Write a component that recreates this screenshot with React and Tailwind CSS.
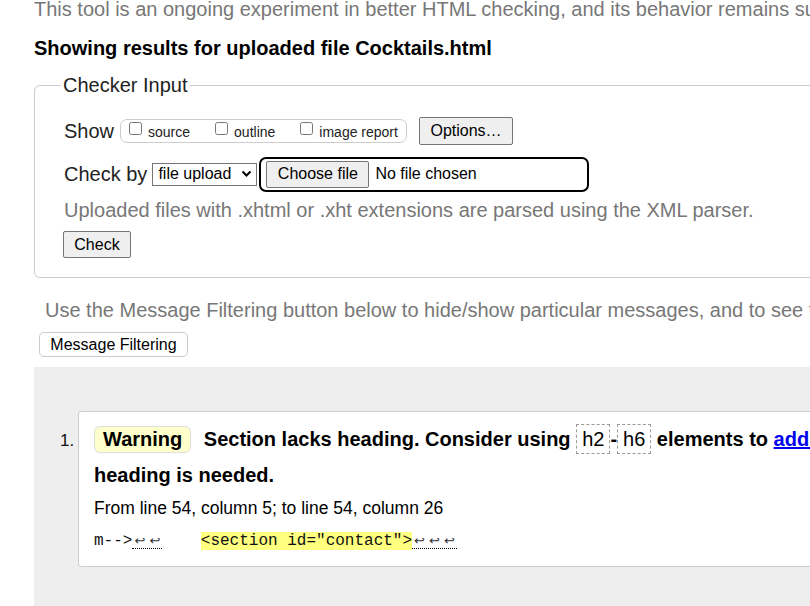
import React from "react";

function Btn({ children, className = "" }) {
  return (
    <button
      type="button"
      className={`bg-[#efefef] border border-[#767676] rounded-[2px] text-[16px] leading-[18px] text-black ${className}`}
    >
      {children}
    </button>
  );
}

function Check({ label }) {
  return (
    <label className="flex items-center gap-[6px]">
      <input type="checkbox" className="m-0 w-[13px] h-[13px] -mt-[5px]" />
      <span className="text-[14px] leading-[16px] pt-[2px]">{label}</span>
    </label>
  );
}

function Arrows({ n }) {
  return (
    <span className="border-b border-dotted border-black font-['DejaVu_Sans',sans-serif] text-[13px] text-[#333]">
      {Array.from({ length: n }).map((_, i) => (
        <span key={i} className="inline-block w-[15px] text-center">
          ↩
        </span>
      ))}
    </span>
  );
}

export default function App() {
  return (
    <div className="w-[810px] h-[606px] overflow-hidden bg-white font-['Liberation_Sans',Arial,sans-serif] text-[#222]">
      <p className="pl-[34px] -mt-[2px] whitespace-nowrap text-[20px] leading-[22px] text-[#777]">
        This tool is an ongoing experiment in better HTML checking, and its
        behavior remains subject to change
      </p>
      <h2 className="pl-[34px] mt-[16px] whitespace-nowrap text-[20px] leading-[24px] font-bold text-black">
        Showing results for uploaded file Cocktails.html
      </h2>

      <fieldset className="ml-[34px] mt-[14px] w-[900px] border border-[#ccc] rounded-[6px] pl-[29px] pb-[19px]">
        <legend className="-ml-[3px] px-[2px] text-[20px] leading-[22px]">
          Checker Input
        </legend>

        <div className="mt-[20px] h-[30px] flex items-center">
          <span className="text-[20px] leading-[24px] mr-[6px]">Show</span>
          <div className="h-[24px] w-[287px] flex items-center border border-[#ccc] rounded-[7px] pl-[8px] gap-[25px]">
            <Check label="source" />
            <Check label="outline" />
            <Check label="image report" />
          </div>
          <Btn className="ml-[12px] w-[94px] h-[28px]">Options…</Btn>
        </div>

        <div className="mt-[11px] h-[34px] flex items-center">
          <span className="text-[20px] leading-[24px] mr-[5px]">Check by</span>
          <div className="w-[105px] h-[23px] border border-[#767676] flex items-center justify-between pl-[5px] pr-[4px] text-[16px] text-black">
            <span>file upload</span>
            <svg width="11" height="8" viewBox="0 0 11 8">
              <path d="M1.5 1.5 L5.5 5.5 L9.5 1.5" fill="none" stroke="#000" strokeWidth="2" />
            </svg>
          </div>
          <div className="ml-[2px] w-[330px] h-[35px] border-2 border-black rounded-[7px] flex items-center pl-[5px]">
            <Btn className="w-[103px] h-[27px]">Choose file</Btn>
            <span className="ml-[6px] text-[16px] text-black">No file chosen</span>
          </div>
        </div>

        <p className="mt-[7px] h-[24px] text-[20px] leading-[24px] text-[#777] whitespace-nowrap">
          Uploaded files with .xhtml or .xht extensions are parsed using the XML
          parser.
        </p>

        <Btn className="mt-[9px] -ml-[1px] w-[68px] h-[27px] block">Check</Btn>
      </fieldset>

      <p className="pl-[45px] mt-[20px] text-[20px] leading-[24px] text-[#777] whitespace-nowrap">
        Use the Message Filtering button below to hide/show particular messages,
        and to see total counts of errors and warnings.
      </p>
      <button
        type="button"
        className="ml-[39px] mt-[10px] w-[149px] h-[25px] bg-white border border-[#ccc] rounded-[5px] text-[16px] leading-[18px] text-black block"
      >
        Message Filtering
      </button>

      <div className="ml-[34px] mt-[10px] w-[900px] h-[260px] bg-[#eee] pt-[44px] pl-[26px] flex items-start">
        <span className="w-[18px] shrink-0 mt-[20px] text-[17px] leading-[20px] text-[#111]">
          1.
        </span>
        <div className="w-[1400px] shrink-0 h-[156px] bg-white border border-[#ccc] rounded-[3px] pl-[15px] pt-[9px] text-black">
          <p className="text-[20px] leading-[36px] font-bold whitespace-nowrap">
            <span className="inline-block h-[27px] px-[8px] leading-[25px] bg-[#ffffcc] border border-[#ddd] rounded-[6px] align-middle -mt-[3px]">
              Warning
            </span>{" "}
            <span className="ml-[7px]">Section lacks heading. Consider using</span>{" "}
            <code className="inline-block font-normal font-['Liberation_Sans',Arial,sans-serif] h-[30px] px-[5px] leading-[28px] border border-dashed border-[#999] align-middle -mt-[3px]">
              h2
            </code>
            -
            <code className="inline-block font-normal font-['Liberation_Sans',Arial,sans-serif] h-[30px] px-[5px] leading-[28px] border border-dashed border-[#999] align-middle -mt-[3px]">
              h6
            </code>{" "}
            elements to{" "}
            <a className="text-[#0000ee] underline" href="#">
              add identifying headings
            </a>{" "}
            to all sections, or else use a div element instead for any cases where no
            <br />
            heading is needed.
          </p>
          <p className="mt-[3px] text-[17.5px] leading-[24px]">
            From line 54, column 5; to line 54, column 26
          </p>
          <p className="mt-[11px] font-['Liberation_Mono',monospace] text-[16px] leading-[20px] whitespace-pre text-[#111]">
            m--&gt;<Arrows n={2} />
            {"    "}
            <span className="bg-[#ffff80]">&lt;section id="contact"&gt;</span>
            <Arrows n={3} />
          </p>
        </div>
      </div>
    </div>
  );
}
